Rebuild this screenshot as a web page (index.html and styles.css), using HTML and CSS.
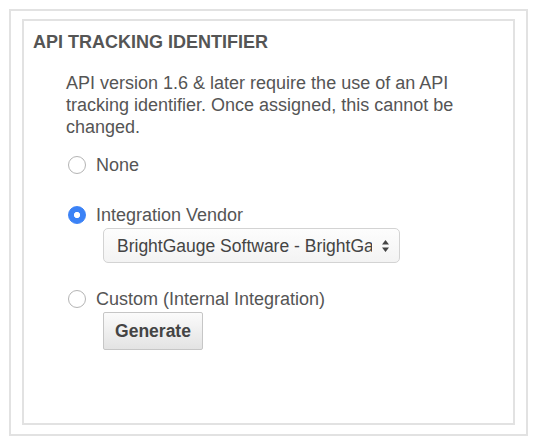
FILE: index.html
```html
<!DOCTYPE html>
<html>
<head>
<meta charset="utf-8">
<link rel="stylesheet" href="styles.css">
</head>
<body>
<div class="outer">
  <section class="panel">
    <h2 class="title">API TRACKING IDENTIFIER</h2>
    <p class="desc">API version 1.6 &amp; later require the use of an API tracking identifier. Once assigned, this cannot be changed.</p>
    <div class="options">
      <label class="opt opt-none"><input type="radio" name="track" class="radio"><span>None</span></label>
      <div class="group group-vendor">
        <label class="opt"><input type="radio" name="track" class="radio" checked><span>Integration Vendor</span></label>
        <div class="select-wrap">
          <select class="select"><option>BrightGauge Software - BrightGauge</option></select>
          <svg class="arrows" width="9" height="14" viewBox="0 0 9 14"><path d="M4.5 1 L8 5.5 H1 Z M4.5 13 L8 8.5 H1 Z" fill="#444"/></svg>
        </div>
      </div>
      <div class="group group-custom">
        <label class="opt"><input type="radio" name="track" class="radio"><span>Custom (Internal Integration)</span></label>
        <button class="btn" type="button">Generate</button>
      </div>
    </div>
  </section>
</div>
</body>
</html>
```
FILE: styles.css
```css
html, body {
  margin: 0;
  padding: 0;
  background: #fff;
}
body {
  font-family: "Liberation Sans", Arial, Helvetica, sans-serif;
  color: #555;
  padding: 9px 0 0 9px;
}
.outer {
  box-sizing: border-box;
  width: 519px;
  height: 427px;
  border: 2px solid #e2e2e2;
  padding: 8px 11px 9px 11px;
}
.panel {
  box-sizing: border-box;
  height: 100%;
  border: 2px solid #e2e2e2;
  padding: 10px 40px 0 9px;
}
.title {
  margin: 0;
  font-size: 18px;
  line-height: 22px;
  font-weight: bold;
  color: #555;
}
.desc {
  margin: 19px 0 0 33px;
  font-size: 18px;
  line-height: 22px;
  color: #555;
}
.options {
  margin: 16px 0 0 35px;
  display: flex;
  flex-direction: column;
}
.opt {
  display: flex;
  align-items: center;
  gap: 10px;
  height: 22px;
  font-size: 18px;
  line-height: 22px;
  color: #555;
}
.group-vendor {
  margin-top: 28px;
  display: flex;
  flex-direction: column;
}
.group-custom {
  margin-top: 25px;
  display: flex;
  flex-direction: column;
}
.radio {
  appearance: none;
  -webkit-appearance: none;
  box-sizing: border-box;
  width: 18px;
  height: 18px;
  margin: 0;
  border: 1px solid #b4b4b4;
  border-radius: 50%;
  background: #fff;
  flex: none;
}
.radio:checked {
  border-color: #3b82f6;
  background: radial-gradient(circle, #fff 0 2.8px, #3b82f6 3.3px);
}
.select-wrap {
  position: relative;
  margin: 2px 0 0 35px;
  width: 297px;
  height: 35px;
}
.select {
  appearance: none;
  -webkit-appearance: none;
  box-sizing: border-box;
  width: 100%;
  height: 35px;
  padding: 0 27px 0 13px;
  border: 1px solid #d3d3d3;
  border-radius: 5px;
  background: linear-gradient(#fdfdfd, #f3f3f3);
  font-family: "Liberation Sans", Arial, Helvetica, sans-serif;
  font-size: 17.5px;
  color: #444;
}
.arrows {
  position: absolute;
  right: 10px;
  top: 11px;
  pointer-events: none;
}
.btn {
  box-sizing: border-box;
  margin: 2px 0 0 35px;
  width: 100px;
  height: 38px;
  border: 1px solid #c6c6c6;
  border-radius: 2px;
  background: linear-gradient(#fbfbfb, #e3e3e3);
  font-family: "Liberation Sans", Arial, Helvetica, sans-serif;
  font-size: 17.5px;
  font-weight: bold;
  color: #444;
  align-self: flex-start;
  padding: 0;
}
```
